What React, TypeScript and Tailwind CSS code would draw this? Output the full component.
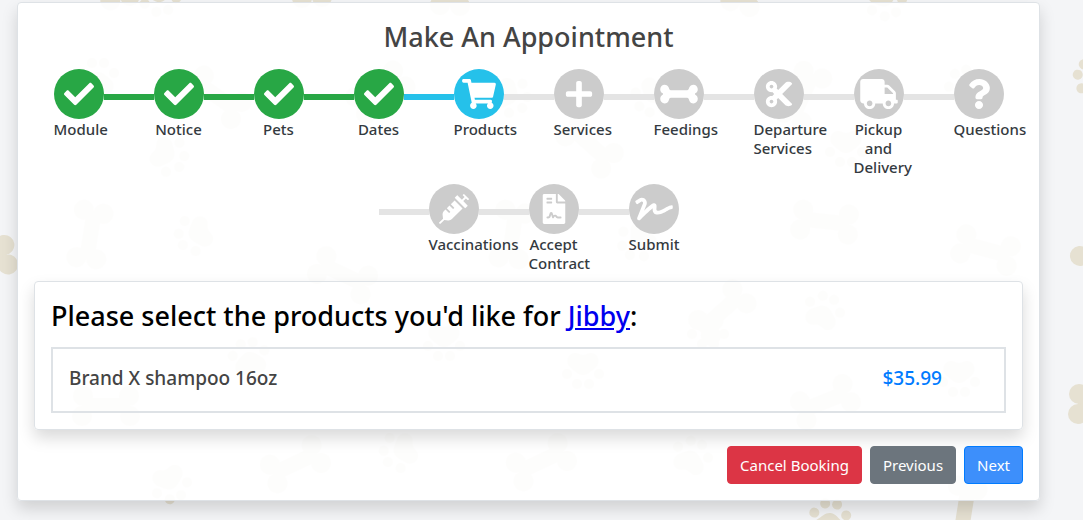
import React from "react";
import type { IconType } from "react-icons";
import {
  FaBone,
  FaCheck,
  FaCut,
  FaFileContract,
  FaPlus,
  FaQuestion,
  FaShoppingCart,
  FaSignature,
  FaSyringe,
  FaTruck,
} from "react-icons/fa";

type StepState = "done" | "current" | "pending";

interface Step {
  label: string;
  icon: IconType;
  state: StepState;
}

const steps: Step[] = [
  { label: "Module", icon: FaCheck, state: "done" },
  { label: "Notice", icon: FaCheck, state: "done" },
  { label: "Pets", icon: FaCheck, state: "done" },
  { label: "Dates", icon: FaCheck, state: "done" },
  { label: "Products", icon: FaShoppingCart, state: "current" },
  { label: "Services", icon: FaPlus, state: "pending" },
  { label: "Feedings", icon: FaBone, state: "pending" },
  { label: "Departure Services", icon: FaCut, state: "pending" },
  { label: "Pickup and Delivery", icon: FaTruck, state: "pending" },
  { label: "Questions", icon: FaQuestion, state: "pending" },
  { label: "Vaccinations", icon: FaSyringe, state: "pending" },
  { label: "Accept Contract", icon: FaFileContract, state: "pending" },
  { label: "Submit", icon: FaSignature, state: "pending" },
];

const circleColor: Record<StepState, string> = {
  done: "bg-[#28a745]",
  current: "bg-[#25c1ea]",
  pending: "bg-[#cccccc]",
};

const lineColor: Record<StepState, string> = {
  done: "bg-[#28a745]",
  current: "bg-[#25c1ea]",
  pending: "bg-[#e4e4e4]",
};

// x, y, rotation in degrees
type Placement = [number, number, number];

const paws: Placement[] = [
  [98, 76, 0], [170, 156, 115], [193, 235, -110], [249, 356, -10], [171, 485, 160],
  [398, 452, -110], [444, 343, 180], [583, 371, 180], [708, 331, 180], [692, 455, 20],
  [824, 310, 20], [959, 379, 180], [830, 517, 5], [886, 2, 160], [513, 97, 115],
  [846, 149, 180], [965, 84, -20], [651, 98, -150], [1092, 76, -60], [636, 242, -130],
  [160, -2, 170],
];

const bones: Placement[] = [
  [90, 235, 99], [343, 275, 25], [106, 406, 0], [295, 464, -25], [541, 462, -25],
  [825, 222, 6], [986, 250, 15], [825, 402, -22], [722, 312, -42], [590, 145, 42],
  [217, 97, 35], [512, 235, 98], [-17, 258, -8], [964, 511, 99], [1102, 404, 0],
  [1102, 244, -52], [803, 96, -65], [380, 92, -35], [452, -18, 95], [748, -18, 110],
  [116, -25, 80], [312, -26, 90],
];

function PetBackground() {
  return (
    <svg className="pointer-events-none absolute inset-0 h-full w-full" aria-hidden="true">
      <defs>
        <g id="paw">
          <path d="M0-4C5-4 8 0 13 4c5 5 2 14-5 14-3 0-5-2-8-2s-5 2-8 2c-7 0-10-9-5-14C-8 0-5-4 0-4z" />
          <circle cx="-16" cy="-3" r="5" />
          <circle cx="-6" cy="-13" r="5" />
          <circle cx="6" cy="-13" r="5" />
          <circle cx="16" cy="-3" r="5" />
        </g>
        <g id="bone">
          <rect x="-24" y="-8" width="48" height="15" />
          <circle cx="-23" cy="-10" r="10" />
          <circle cx="-24" cy="10" r="10" />
          <circle cx="23" cy="-10" r="10" />
          <circle cx="24" cy="10" r="10" />
        </g>
      </defs>
      <g fill="#e6e1d2">
        {paws.map(([x, y, r]) => (
          <use key={`p${x}-${y}`} href="#paw" transform={`translate(${x} ${y}) rotate(${r})`} />
        ))}
        {bones.map(([x, y, r]) => (
          <use key={`b${x}-${y}`} href="#bone" transform={`translate(${x} ${y}) rotate(${r})`} />
        ))}
      </g>
    </svg>
  );
}

function StepItem({ step, first }: { step: Step; first: boolean }) {
  const Icon = step.icon;
  return (
    <li className="flex pb-[7px]" aria-current={step.state === "current" ? "step" : undefined}>
      {!first && <span className={`mt-[25px] h-1.5 w-[50px] ${lineColor[step.state]}`} />}
      <div className="w-[50px]">
        <span
          className={`flex h-[50px] w-[50px] items-center justify-center rounded-full text-white ${circleColor[step.state]}`}
        >
          <Icon className="h-[30px] w-[38px]" aria-hidden="true" />
        </span>
        <span className="mt-px block text-center text-[15px] leading-[19px] font-medium text-[#343a40]">
          {step.label}
        </span>
      </div>
    </li>
  );
}

const buttonBase = "h-[38px] cursor-pointer rounded border px-3 text-[15px] text-white";

export default function App() {
  return (
    <div className="relative min-h-screen overflow-hidden bg-[#f4f5f7] pt-0.5 pr-[43px] pb-[19px] pl-[17px] font-['Noto_Sans','Open_Sans',sans-serif]">
      <PetBackground />
      <main className="relative rounded border border-[#dee2e6] bg-white/92 p-4 shadow-[0_8px_16px_rgba(0,0,0,0.15)]">
        <h1 className="mb-3.5 text-center text-[27px] leading-[36px] font-medium text-[#444444]">
          Make An Appointment
        </h1>
        <ol className="flex flex-wrap justify-center">
          {steps.map((step, index) => (
            <StepItem key={step.label} step={step} first={index === 0} />
          ))}
        </ol>

        <section className="mt-px rounded border border-[#dee2e6] p-4 shadow-[0_8px_16px_rgba(0,0,0,0.15)]">
          <h2 className="mb-[13px] text-[27px] leading-[36px] font-medium text-black">
            Please select the products you'd like for{" "}
            <a href="#jibby" className="text-[#0000ee] underline">
              Jibby
            </a>
            :
          </h2>
          <div className="flex justify-between border-2 border-[#dee2e6] pt-4 pr-[62px] pb-5 pl-4 text-[19px] leading-[26px] font-medium">
            <span className="text-[#444444]">Brand X shampoo 16oz</span>
            <span className="text-[#007bff]">$35.99</span>
          </div>
        </section>

        <div className="mt-4 flex justify-end gap-2">
          <button type="button" className={`${buttonBase} border-[#dc3545] bg-[#dc3545]`}>
            Cancel Booking
          </button>
          <button type="button" className={`${buttonBase} border-[#6c757d] bg-[#6c757d]`}>
            Previous
          </button>
          <button type="button" className={`${buttonBase} border-[#007bff] bg-[#3d8ffb]`}>
            Next
          </button>
        </div>
      </main>
    </div>
  );
}
